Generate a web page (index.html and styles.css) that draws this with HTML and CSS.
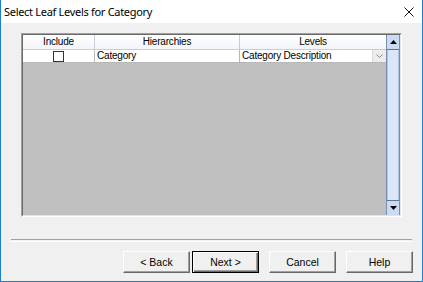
FILE: index.html
```html
<!DOCTYPE html>
<html lang="en">
  <head>
    <meta charset="UTF-8" />
    <title>Select Leaf Levels for Category</title>
    <link rel="stylesheet" href="styles.css">
  </head>
  <body>
    <div class="window">
      <div class="titlebar">
        <span class="title">Select Leaf Levels for Category</span>
        <svg class="close" width="10" height="10" viewBox="0 0 10 10">
          <path d="M0.5 0.5 L9.5 9.5 M9.5 0.5 L0.5 9.5" stroke="#111" stroke-width="1" fill="none" />
        </svg>
      </div>

      <div class="content">
        <div class="grid">
          <div class="grid-inner">
            <div class="table">
              <div class="row head">
                <div class="cell c-inc">Include</div>
                <div class="cell c-hier">Hierarchies</div>
                <div class="cell c-lev">Levels</div>
              </div>
              <div class="row data">
                <div class="cell c-inc"><span class="check"></span></div>
                <div class="cell c-hier left">Category</div>
                <div class="cell c-lev left">
                  <span class="lev-text">Category Description</span>
                  <span class="drop">
                    <svg width="7" height="4" viewBox="0 0 7 4">
                      <path d="M0.5 0.5 L3.5 3.5 L6.5 0.5" stroke="#8a8a8a" fill="none" />
                    </svg>
                  </span>
                </div>
              </div>
            </div>
            <div class="scrollbar">
              <div class="sb-btn">
                <svg width="7" height="4" viewBox="0 0 7 4"><path d="M0 4 L3.5 0 L7 4 Z" fill="#000" /></svg>
              </div>
              <div class="sb-track"></div>
              <div class="sb-btn">
                <svg width="7" height="4" viewBox="0 0 7 4"><path d="M0 0 L7 0 L3.5 4 Z" fill="#000" /></svg>
              </div>
            </div>
          </div>
        </div>

        <div class="separator"></div>

        <div class="buttons">
          <button class="btn">&lt; Back</button>
          <button class="btn default">Next &gt;</button>
          <button class="btn gap">Cancel</button>
          <button class="btn gap">Help</button>
        </div>
      </div>
    </div>
  </body>
</html>
```

FILE: styles.css
```css
body {
  margin: 0;
  background: #f0f0f0;
}
.window {
  box-sizing: border-box;
  width: 423px;
  height: 282px;
  border: 1px solid #1b7fd4;
  border-top: none;
  background: #f0f0f0;
  font-family: "Liberation Sans", Arial, sans-serif;
  font-size: 11px;
  color: #000;
}
.titlebar {
  height: 23px;
  background: #fff;
  display: flex;
  align-items: center;
  justify-content: space-between;
  padding: 0 8px 0 3px;
}
.title {
  font-family: "Noto Sans", "Open Sans", sans-serif;
  font-size: 11px;
  letter-spacing: -0.3px;
  color: #000;
}
.close {
  display: block;
}
.content {
  padding: 10px 9px 0 10px;
}

/* sunken grid box */
.grid {
  margin-left: 10px;
  width: 381px;
  height: 184px;
  box-sizing: border-box;
  border-top: 1px solid #a0a0a0;
  border-left: 1px solid #a0a0a0;
  border-right: 1px solid #fff;
  border-bottom: 1px solid #fff;
  font-size: 10px;
  letter-spacing: -0.2px;
}
.grid-inner {
  height: 100%;
  box-sizing: border-box;
  border-top: 1px solid #696969;
  border-left: 1px solid #696969;
  border-right: 1px solid #e3e3e3;
  border-bottom: 1px solid #e3e3e3;
  display: flex;
}
.table {
  flex: 1;
  background: #c0c0c0;
}
.row {
  display: flex;
}
.row.head {
  height: 15px;
  background: linear-gradient(#ffffff, #f1f4f9);
}
.row.data {
  height: 13px;
  background: #fff;
}
.cell {
  box-sizing: border-box;
  border-right: 1px solid #c5cfdc;
  border-bottom: 1px solid #c5cfdc;
  display: flex;
  align-items: center;
  justify-content: center;
  line-height: 1;
}
.row.data .cell {
  border-bottom: 1px solid #b8b8b8;
  border-right: 1px solid #b8b8b8;
}
.cell.left {
  justify-content: flex-start;
  padding-left: 2px;
}
.c-inc { width: 72px; }
.c-hier { width: 145px; }
.c-lev { width: 146px; border-right: none; }
.row.data .c-lev { border-right: none; }
.lev-text {
  flex: 1;
}
.check {
  width: 9px;
  height: 9px;
  border: 1px solid #333;
  background: #fff;
}
.drop {
  width: 13px;
  height: 12px;
  background: #ececec;
  border-left: 1px solid #d8d8d8;
  display: flex;
  align-items: center;
  justify-content: center;
}

/* vertical scrollbar */
.scrollbar {
  width: 15px;
  display: flex;
  flex-direction: column;
  background: #cfdff4;
  box-sizing: border-box;
  border-left: 1px solid #7a8faf;
  border-right: 1px solid #7a8faf;
}
.sb-btn {
  height: 14px;
  background: #c9dcf4;
  border-bottom: 1px solid #5d7598;
  display: flex;
  align-items: center;
  justify-content: center;
}
.sb-btn:last-child {
  border-bottom: none;
  border-top: 1px solid #5d7598;
}
.sb-track {
  flex: 1;
  background: #dbe7f8;
  border-left: 1px solid #aec4e2;
  border-right: 1px solid #aec4e2;
}

.separator {
  margin-top: 22px;
  width: 401px;
  height: 1px;
  border-top: 1px solid #a0a0a0;
  border-bottom: 1px solid #fff;
}
.buttons {
  margin-top: 9px;
  display: flex;
  justify-content: flex-end;
}
.btn {
  width: 67px;
  height: 22px;
  margin: 0 0 0 2px;
  padding: 0;
  font-family: "Liberation Sans", Arial, sans-serif;
  font-size: 10.5px;
  color: #000;
  background: #f0f0f0;
  border-top: 1px solid #fff;
  border-left: 1px solid #fff;
  border-right: 1px solid #696969;
  border-bottom: 1px solid #696969;
  box-shadow: inset -1px -1px 0 #a0a0a0;
}
.btn.default {
  border: 1px solid #000;
  box-shadow: inset 1px 1px 0 #fff, inset -1px -1px 0 #696969, inset -2px -2px 0 #a0a0a0;
}
.btn.gap {
  margin-left: 10px;
}
```
